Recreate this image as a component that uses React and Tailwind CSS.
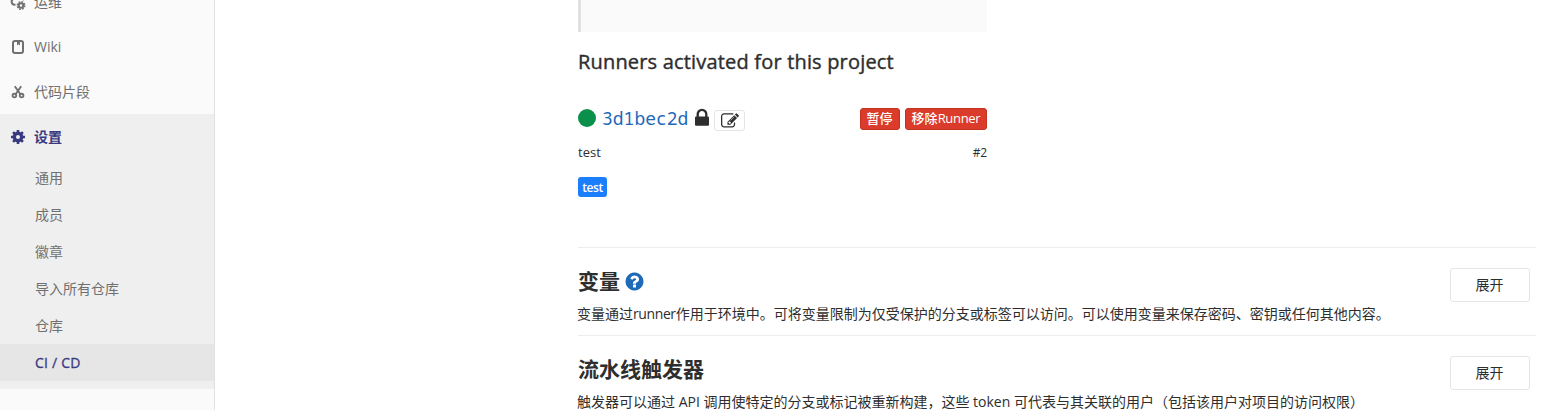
import React from "react";

const subItems = ["通用", "成员", "徽章", "导入所有仓库", "仓库"];

const sans = "font-['Open_Sans','Noto_Sans_CJK_SC',sans-serif]";

function OperationsIcon() {
  return (
    <svg className="block size-4" viewBox="0 0 16 16" fill="none" stroke="currentColor">
      <path d="M5.500 10.800H4.600A3.100 3.100 0 0 1 4 4.700A4 4 0 0 1 11.500 4.300A3 3 0 0 1 14 6.200" strokeWidth="2" />
      <circle cx="11" cy="11.500" r="2.300" strokeWidth="2" />
      <circle cx="11" cy="11.500" r="3.700" strokeWidth="1.500" strokeDasharray="1.700 1.206" />
    </svg>
  );
}

function WikiIcon() {
  return (
    <svg className="block size-4" viewBox="0 0 16 16" fill="currentColor">
      <path fillRule="evenodd" d="M5 1h6a3 3 0 0 1 3 3v8a3 3 0 0 1-3 3H5a3 3 0 0 1-3-3V4a3 3 0 0 1 3-3zm0 2a1 1 0 0 0-1 1v8a1 1 0 0 0 1 1h6a1 1 0 0 0 1-1V4a1 1 0 0 0-1-1z" />
      <path d="M7 3h3v3.500L8.500 5.300 7 6.500z" />
    </svg>
  );
}

function SnippetIcon() {
  return (
    <svg className="block size-4" viewBox="0 0 16 16" fill="none" stroke="currentColor">
      <circle cx="4.400" cy="11.600" r="1.800" strokeWidth="1.900" />
      <circle cx="11.600" cy="11.600" r="1.800" strokeWidth="1.900" />
      <path d="M4.800 2.200L10.400 10.200M11.200 2.200L5.600 10.200" strokeWidth="1.900" />
    </svg>
  );
}

function GearIcon() {
  return (
    <svg className="block size-4" viewBox="0 0 16 16" fill="none" stroke="currentColor">
      <circle cx="8" cy="8" r="3.700" strokeWidth="3.400" />
      <path d="M8 1v3M8 12v3M1 8h3M12 8h3M3.050 3.050l2.100 2.100M10.850 10.850l2.100 2.100M3.050 12.950l2.100-2.100M10.850 5.150l2.100-2.100" strokeWidth="2.600" />
    </svg>
  );
}

function LockIcon() {
  return (
    <svg className="block h-[22px] w-[14px]" viewBox="320 0 1152 1792" fill="currentColor">
      <path d="M640 768h512v-192q0-106-75-181t-181-75-181 75-75 181v192zm832 96v576q0 40-28 68t-68 28h-960q-40 0-68-28t-28-68v-576q0-40 28-68t68-28h32v-192q0-184 132-316t316-132 316 132 132 316v192h32q40 0 68 28t28 68z" />
    </svg>
  );
}

function EditIcon() {
  return (
    <svg className="block size-[18px]" viewBox="0 0 1792 1792" fill="currentColor">
      <path d="M888 1184l116-116-152-152-116 116v56h96v96h56zm440-720q-16-16-33 1l-350 350q-17 17-1 33t33-1l350-350q17-17 1-33zm80 594v190q0 119-84.5 203.5t-203.5 84.5h-832q-119 0-203.5-84.5t-84.5-203.5v-832q0-119 84.5-203.5t203.5-84.5h832q63 0 117 25 15 7 18 23 3 17-9 29l-49 49q-14 14-32 8-23-6-45-6h-832q-66 0-113 47t-47 113v832q0 66 47 113t113 47h832q66 0 113-47t47-113v-126q0-13 9-22l64-64q15-15 35-7t20 29zm-96-738l288 288-672 672h-288v-288zm444 132l-92 92-288-288 92-92q28-28 68-28t68 28l152 152q28 28 28 68t-28 68z" />
    </svg>
  );
}

function HelpIcon() {
  return (
    <svg className="mb-[2px] block size-[21px] text-[#1f69b9]" viewBox="0 0 1792 1792" fill="currentColor">
      <path d="M1024 1376v-192q0-14-9-23t-23-9h-192q-14 0-23 9t-9 23v192q0 14 9 23t23 9h192q14 0 23-9t9-23zm256-672q0-88-55.5-163t-138.5-116-170-41q-243 0-371 213-15 24 8 42l132 100q7 6 19 6 16 0 25-12 53-68 86-92 34-24 86-24 48 0 85.5 26t37.5 59q0 38-20 61t-68 45q-63 28-115.5 86.5t-52.5 125.5v36q0 14 9 23t23 9h192q14 0 23-9t9-23q0-19 21.5-49.5t54.5-49.5q32-18 49-28.5t46-35 44.5-48 28-60.5 12.5-81zm384 192q0 209-103 385.5t-279.5 279.5-385.5 103-385.5-103-279.5-279.5-103-385.5 103-385.5 279.5-279.5 385.5-103 385.5 103 279.5 279.5 103 385.5z" />
    </svg>
  );
}

function NavItem({ icon, children, active }) {
  return (
    <div
      className={
        active
          ? "flex h-[45px] shrink-0 items-center gap-2 pl-[10px] font-semibold text-[#393982]"
          : "flex h-[45px] shrink-0 items-center gap-2 pl-[10px] text-[#707070]"
      }
    >
      {icon}
      <span>{children}</span>
    </div>
  );
}

function Sidebar() {
  return (
    <aside className="flex w-[215px] shrink-0 flex-col border-r border-[#e1e1e1] bg-[#fafafa] text-sm">
      <div className="-mt-[21px] flex flex-col">
        <NavItem icon={<OperationsIcon />}>运维</NavItem>
        <NavItem icon={<WikiIcon />}>Wiki</NavItem>
        <NavItem icon={<SnippetIcon />}>代码片段</NavItem>
      </div>
      <div className="flex flex-col bg-[#efefef] pb-2">
        <NavItem icon={<GearIcon />} active>设置</NavItem>
        {subItems.map((item) => (
          <div key={item} className="flex h-[37px] items-center pl-[35px] text-[#707070]">{item}</div>
        ))}
        <div className="flex h-[37px] items-center bg-[#e6e6e6] pl-[35px] font-medium tracking-[0.2px] text-[#393982] [-webkit-text-stroke:0.3px_#393982]">CI / CD</div>
      </div>
    </aside>
  );
}

function Section({ title, help, children }) {
  return (
    <section className="flex h-[88px] w-[958px] justify-between border-t border-[#eeeeee] pt-5 pr-[6px]">
      <div className="flex flex-col">
        <h4 className="flex h-[28px] items-center gap-1 text-[21px] font-bold text-[#2e2e2e]">
          {title}
          {help && <HelpIcon />}
        </h4>
        <p className="mt-2 -ml-px h-5 text-sm leading-5 whitespace-nowrap text-[#2e2e2e]">{children}</p>
      </div>
      <button className="flex h-[34px] w-20 items-center justify-center rounded-[3px] border border-[#e5e5e5] pr-px text-sm text-[#2e2e2e]">展开</button>
    </section>
  );
}

export default function App() {
  return (
    <div className={`flex h-[410px] w-[1550px] overflow-hidden bg-white text-[#2e2e2e] ${sans}`}>
      <Sidebar />
      <main className="flex flex-col pl-[363px]">
        <div className="h-8 w-[409px] shrink-0 border-l-[3px] border-[#e1e1e1] bg-[#fafafa]" />
        <h4 className="mt-4 h-7 shrink-0 text-[20px] leading-7 font-medium tracking-[0.18px] whitespace-nowrap [-webkit-text-stroke:0.4px_#2e2e2e]">Runners activated for this project</h4>
        <div className="mt-[29px] flex h-[26px] w-[409px] shrink-0 items-center justify-between">
          <div className="flex items-center">
            <span className="mb-px size-[18px] rounded-full bg-[#0b904b]" />
            <span className="ml-[6px] font-['Noto_Sans_Mono','DejaVu_Sans_Mono',monospace] text-[18px] text-[#1f69b9]">3d1bec2d</span>
            <span className="mb-px ml-[7px]"><LockIcon /></span>
            <span className="mt-[5px] ml-[5px] flex h-[21px] w-[31px] items-center justify-center rounded-[3px] border border-[#e5e5e5]"><EditIcon /></span>
          </div>
          <div className="mt-[2px] flex gap-[5px] text-[13px] font-medium text-white">
            <span className="flex h-[22px] w-10 items-center justify-center rounded-[3px] border border-[#c0341d] bg-[#db3b2a] pr-px">暂停</span>
            <span className="flex h-[22px] w-[82px] items-center justify-center rounded-[3px] border border-[#c0341d] bg-[#db3b2a]"><span>移除<span className="tracking-[-0.3px]">Runner</span></span></span>
          </div>
        </div>
        <div className="mt-3 flex h-5 w-[409px] shrink-0 items-center justify-between text-[13px]">
          <span>test</span>
          <span className="text-xs tracking-[-0.2px]">#2</span>
        </div>
        <div className="mt-[14px] flex h-5 w-[29px] shrink-0 items-center justify-center rounded-[3px] bg-[#1b7efd] pt-px text-xs font-semibold tracking-[-0.4px] text-white">test</div>
        <div className="mt-[50px] flex shrink-0 flex-col">
          <Section title="变量" help>变量通过<span className="tracking-[-0.4px]">runner</span>作用于环境中。可将变量限制为仅受保护的分支或标签可以访问。可以使用变量来保存密码、密钥或任何其他内容。</Section>
          <Section title="流水线触发器">触发器可以通过 API 调用使特定的分支或标记被重新构建，这些 token 可代表与其关联的用户（包括该用户对项目的访问权限）</Section>
        </div>
      </main>
    </div>
  );
}
